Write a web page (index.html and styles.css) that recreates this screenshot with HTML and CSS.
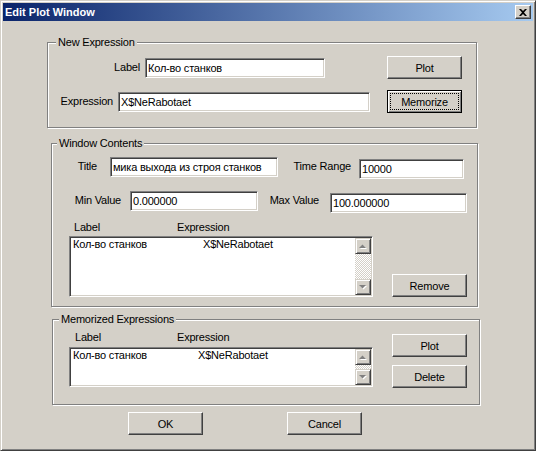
FILE: index.html
```html
<!DOCTYPE html>
<html lang="ru">
  <head>
    <meta charset="UTF-8" />
    <meta name="viewport" content="width=device-width" />
    <title>Edit Plot Window</title>
    <link rel="stylesheet" href="styles.css">
  </head>

  <body>
    <div class="window">
      <div class="titlebar">
        <span class="caption">Edit Plot Window</span>
        <button class="close" aria-label="Close">
          <svg width="8" height="7" viewBox="0 0 8 7">
            <path d="M0 0h2l2 2 2-2h2L5 3.5 8 7H6L4 5 2 7H0l3-3.5z" fill="#000" />
          </svg>
        </button>
      </div>

      <div class="client">
        <div class="group group-new">
          <span class="group-title">New Expression</span>
          <div class="row row-new1">
            <label class="lbl lbl-label">Label</label>
            <input class="edit edit-label" value="Кол-во станков" />
            <button class="btn btn-plot">Plot</button>
          </div>
          <div class="row row-new2">
            <label class="lbl lbl-expr">Expression</label>
            <input class="edit edit-expr" value="X$NeRabotaet" />
            <button class="btn btn-default btn-memo">Memorize</button>
          </div>
        </div>

        <div class="group group-contents">
          <span class="group-title">Window Contents</span>
          <div class="row row-c1">
            <label class="lbl lbl-title">Title</label>
            <input class="edit edit-title" value="мика выхода из строя станков" />
            <label class="lbl lbl-time">Time Range</label>
            <input class="edit edit-time" value="10000" />
          </div>
          <div class="row row-c2">
            <label class="lbl lbl-min">Min Value</label>
            <input class="edit edit-min" value="0.000000" />
            <label class="lbl lbl-max">Max Value</label>
            <input class="edit edit-max" value="100.000000" />
          </div>
          <div class="row row-c3">
            <div class="listcol listcol-contents">
              <div class="hdr"><span class="hdr-label">Label</span><span>Expression</span></div>
              <div class="listbox listbox-contents">
                <div class="items">
                  <div class="item"><span class="col-label">Кол-во станков</span><span>X$NeRabotaet</span></div>
                </div>
                <div class="vscroll">
                  <div class="sb-btn">
                    <svg width="8" height="5" viewBox="0 0 8 5"><path d="M1 5h7L4.5 1.5z" fill="#fff" /><path d="M0 4h7L3.5 0.5z" fill="#808080" /></svg>
                  </div>
                  <div class="sb-track"></div>
                  <div class="sb-btn">
                    <svg width="8" height="5" viewBox="0 0 8 5"><path d="M1 1h7L4.5 4.5z" fill="#fff" /><path d="M0 0h7L3.5 3.5z" fill="#808080" /></svg>
                  </div>
                </div>
              </div>
            </div>
            <button class="btn btn-remove">Remove</button>
          </div>
        </div>

        <div class="group group-memo">
          <span class="group-title">Memorized Expressions</span>
          <div class="row row-m">
            <div class="listcol listcol-memo">
              <div class="hdr"><span class="hdr-label">Label</span><span>Expression</span></div>
              <div class="listbox listbox-memo">
                <div class="items">
                  <div class="item"><span class="col-label">Кол-во станков</span><span>X$NeRabotaet</span></div>
                </div>
                <div class="vscroll">
                  <div class="sb-btn">
                    <svg width="8" height="5" viewBox="0 0 8 5"><path d="M1 5h7L4.5 1.5z" fill="#fff" /><path d="M0 4h7L3.5 0.5z" fill="#808080" /></svg>
                  </div>
                  <div class="sb-track"></div>
                  <div class="sb-btn">
                    <svg width="8" height="5" viewBox="0 0 8 5"><path d="M1 1h7L4.5 4.5z" fill="#fff" /><path d="M0 0h7L3.5 3.5z" fill="#808080" /></svg>
                  </div>
                </div>
              </div>
            </div>
            <div class="btncol">
              <button class="btn">Plot</button>
              <button class="btn">Delete</button>
            </div>
          </div>
        </div>

        <div class="row dialog-buttons">
          <button class="btn btn-ok">OK</button>
          <button class="btn btn-cancel">Cancel</button>
        </div>
      </div>
    </div>
  </body>
</html>
```

FILE: styles.css
```css
* {
  box-sizing: border-box;
}
html,
body {
  margin: 0;
  background: #d4d0c8;
}
body {
  font: 11px "Liberation Sans", Arial, sans-serif;
  letter-spacing: -0.2px;
  color: #000;
}
.window {
  width: 536px;
  height: 451px;
  display: flex;
  flex-direction: column;
  padding: 2px;
  background: #d4d0c8;
  border: 1px solid;
  border-color: #d4d0c8 #404040 #404040 #d4d0c8;
  box-shadow: inset 1px 1px #fff, inset -1px -1px #808080;
}
.titlebar {
  display: flex;
  align-items: center;
  height: 18px;
  padding-left: 2px;
  background: linear-gradient(to right, #0a246a, #a6caf0);
}
.caption {
  color: #fff;
  font-weight: bold;
  letter-spacing: 0;
}
.close {
  display: flex;
  align-items: center;
  justify-content: center;
  width: 16px;
  height: 14px;
  margin: 0 2px 0 auto;
  padding: 0;
  background: #d4d0c8;
  border: 1px solid;
  border-color: #fff #404040 #404040 #fff;
  box-shadow: inset -1px -1px #808080;
}
.client {
  flex: 1;
  display: flex;
  flex-direction: column;
}
.row {
  display: flex;
}

/* group boxes */
.group {
  position: relative;
  border: 1px solid #808080;
  box-shadow: inset 1px 1px #fff, 1px 1px #fff;
}
.group-title {
  position: absolute;
  top: -7px;
  left: 8px;
  padding: 0 2px;
  line-height: 13px;
  background: #d4d0c8;
}
.group-new {
  width: 430px;
  height: 86px;
  margin: 21px 0 0 44px;
}
.group-contents {
  width: 427px;
  height: 164px;
  margin: 15px 0 0 48px;
}
.group-contents .group-title {
  left: 5px;
}
.group-memo {
  width: 428px;
  height: 86px;
  margin: 12px 0 0 49px;
}
.group-memo .group-title {
  left: 6px;
}

/* static labels */
.lbl {
  flex: none;
  height: 20px;
  line-height: 19px;
  text-align: right;
  padding-right: 5px;
}

/* edit boxes */
.edit {
  flex: none;
  height: 20px;
  padding: 0 2px;
  font: inherit;
  letter-spacing: inherit;
  color: #000;
  background: #fff;
  border: 1px solid;
  border-color: #808080 #fff #fff #808080;
  box-shadow: inset 1px 1px #404040, inset -1px -1px #d4d0c8;
  outline: none;
}

/* push buttons */
.btn {
  flex: none;
  width: 75px;
  height: 23px;
  padding: 0;
  font: inherit;
  letter-spacing: inherit;
  color: #000;
  background: #d4d0c8;
  border: 1px solid;
  border-color: #fff #404040 #404040 #fff;
  box-shadow: inset -1px -1px #808080;
}
.btn-default {
  border-color: #000;
  box-shadow: inset 1px 1px #fff, inset -1px -1px #808080;
  outline: 1px dotted #000;
  outline-offset: -4px;
}

/* New Expression */
.row-new1 {
  align-items: center;
  margin-top: 13px;
}
.lbl-label {
  width: 97px;
}
.edit-label {
  width: 180px;
}
.btn-plot {
  margin-left: 62px;
}
.row-new2 {
  align-items: center;
  margin-top: 11px;
}
.lbl-expr {
  width: 70px;
}
.edit-expr {
  width: 252px;
}
.btn-memo {
  margin-left: 17px;
}

/* Window Contents */
.row-c1 {
  align-items: flex-start;
  margin-top: 13px;
}
.lbl-title {
  width: 58px;
  padding-right: 13px;
}
.edit-title {
  width: 168px;
}
.lbl-time {
  width: 81px;
  padding-right: 8px;
}
.edit-time {
  width: 105px;
  margin-top: 2px;
}
.row-c2 {
  align-items: flex-start;
  margin-top: 12px;
}
.lbl-min {
  width: 78px;
  padding-right: 9px;
}
.edit-min {
  width: 128px;
}
.lbl-max {
  width: 72px;
  padding-right: 11px;
}
.edit-max {
  width: 137px;
  margin-top: 2px;
}
.row-c3 {
  align-items: flex-end;
}
.listcol-contents {
  margin: 8px 0 0 17px;
}
.btn-remove {
  margin-left: 19px;
}

/* list boxes */
.hdr {
  display: flex;
  height: 13px;
  line-height: 13px;
}
.hdr-label {
  width: 108px;
  padding-left: 5px;
}
.listcol-memo .hdr-label {
  padding-left: 6px;
}
.listbox {
  display: flex;
  width: 304px;
  margin-top: 2px;
  padding: 1px;
  background: #fff;
  border: 1px solid;
  border-color: #808080 #fff #fff #808080;
  box-shadow: inset 1px 1px #404040, inset -1px -1px #d4d0c8;
}
.listbox-contents {
  height: 61px;
}
.listbox-memo {
  height: 40px;
  margin-top: 3px;
}
.items {
  flex: 1;
  padding-left: 2px;
}
.item {
  display: flex;
  height: 13px;
  line-height: 13px;
}
.col-label {
  width: 130px;
}
.listbox-memo .col-label {
  width: 125px;
}
.vscroll {
  display: flex;
  flex-direction: column;
  width: 16px;
}
.sb-btn {
  display: flex;
  align-items: center;
  justify-content: center;
  height: 16px;
  background: #d4d0c8;
  border: 1px solid;
  border-color: #d4d0c8 #404040 #404040 #d4d0c8;
  box-shadow: inset 1px 1px #fff, inset -1px -1px #808080;
}
.sb-track {
  flex: 1;
  background: repeating-conic-gradient(#fff 0 25%, #d4d0c8 0 50%) 0 0 / 2px 2px;
}

/* Memorized Expressions */
.listcol-memo {
  margin: 11px 0 0 16px;
}
.btncol {
  display: flex;
  flex-direction: column;
  gap: 8px;
  margin: 14px 0 0 19px;
}

/* OK / Cancel */
.dialog-buttons {
  margin: 7px 0 0 125px;
}
.btn-cancel {
  margin-left: 84px;
}
```
